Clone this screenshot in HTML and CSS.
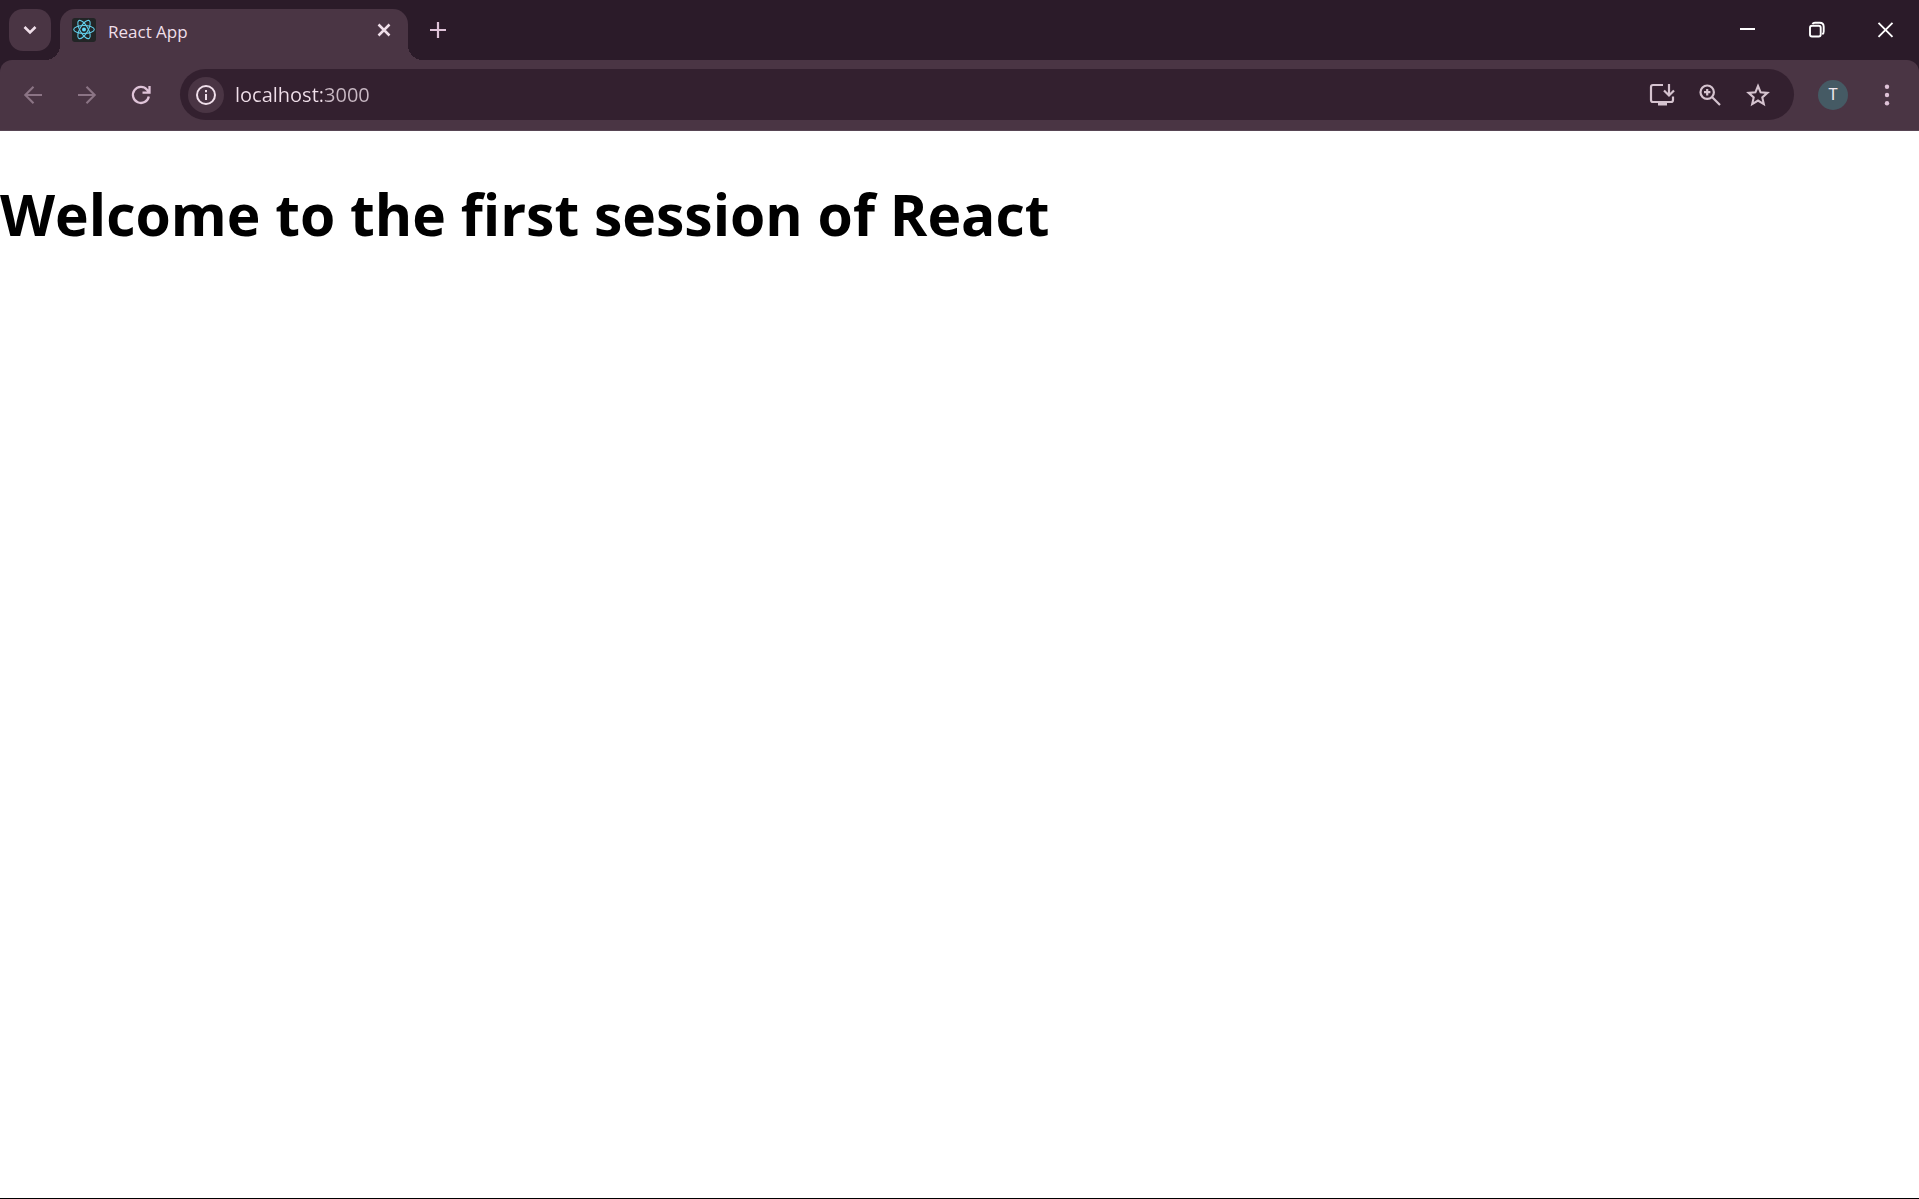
FILE: index.html
```html
<!DOCTYPE html>
<html lang="en">
<head>
<meta charset="utf-8">
<title>React App</title>
<link rel="stylesheet" href="styles.css">
</head>
<body>
<header class="browser">
  <div class="tab-strip">
    <button class="tab-search" type="button" aria-label="Search tabs">
      <svg width="24" height="24" viewBox="0 0 24 24"><path d="M6.500 9l5.500 5.500L17.500 9" fill="none" stroke="currentColor" stroke-width="2.600"/></svg>
    </button>
    <div class="tab">
      <svg class="favicon" width="24" height="24" viewBox="0 0 24 24">
        <rect width="24" height="24" rx="3" fill="#222526"/>
        <g fill="none" stroke="#61cdea" stroke-width="1.100">
          <ellipse cx="12" cy="11.500" rx="10.300" ry="4"/>
          <ellipse cx="12" cy="11.500" rx="10.300" ry="4" transform="rotate(60 12 11.500)"/>
          <ellipse cx="12" cy="11.500" rx="10.300" ry="4" transform="rotate(120 12 11.500)"/>
        </g>
        <circle cx="12" cy="11.500" r="2" fill="#61dafb"/>
      </svg>
      <span class="tab-title">React App</span>
      <button class="tab-close" type="button" aria-label="Close tab">
        <svg width="24" height="24" viewBox="0 0 24 24"><path d="M6.500 6.500l11 11m0-11l-11 11" stroke="currentColor" stroke-width="2.500"/></svg>
      </button>
    </div>
    <button class="new-tab" type="button" aria-label="New tab">
      <svg width="24" height="24" viewBox="0 0 24 24"><path d="M12 4v16M4 12h16" stroke="currentColor" stroke-width="2.200"/></svg>
    </button>
    <div class="window-controls">
      <button type="button" aria-label="Minimize"><svg width="24" height="24" viewBox="0 0 24 24"><path d="M5 11h15" stroke="currentColor" stroke-width="2"/></svg></button>
      <button type="button" aria-label="Restore"><svg width="24" height="24" viewBox="0 0 24 24"><g fill="none" stroke="currentColor" stroke-width="1.900"><rect x="6" y="7.800" width="10.700" height="10.700" rx="2"/><path d="M8.400 6q.800-1.200 2.600-1.200h4.700q4 0 4 4v4.700q0 2-1.400 2.800"/></g></svg></button>
      <button type="button" aria-label="Close"><svg width="24" height="24" viewBox="0 0 24 24"><path d="M5.500 4.800l14 14m0-14l-14 14" stroke="currentColor" stroke-width="1.900"/></svg></button>
    </div>
  </div>
  <div class="toolbar">
    <button class="tool disabled" type="button" aria-label="Back"><svg width="24" height="24" viewBox="0 0 24 24"><path d="M21 12H5M12.500 3.800L4.300 12l8.200 8.200" fill="none" stroke="currentColor" stroke-width="2.100"/></svg></button>
    <button class="tool disabled" type="button" aria-label="Forward"><svg width="24" height="24" viewBox="0 0 24 24"><path d="M3 12h16M11.500 3.800l8.200 8.200-8.200 8.200" fill="none" stroke="currentColor" stroke-width="2.100"/></svg></button>
    <button class="tool" type="button" aria-label="Reload"><svg width="24" height="24" viewBox="0 0 24 24"><path d="M19.800 13.500A8 8 0 1 1 18 6.700l2 2.300M20.500 3v6.700h-7" fill="none" stroke="currentColor" stroke-width="2.300"/></svg></button>
    <div class="omnibox">
      <button class="site-info" type="button" aria-label="View site information"><svg width="24" height="24" viewBox="0 0 24 24"><circle cx="12" cy="12" r="9" fill="none" stroke="currentColor" stroke-width="2"/><path d="M11 11h2v6h-2zM11 7h2v2.200h-2z" fill="currentColor"/></svg></button>
      <input class="address" type="text" value="localhost:3000" aria-label="Address and search bar">
      <button class="page-action" type="button" aria-label="Install app"><svg width="26" height="26" viewBox="0 0 26 26"><g fill="none" stroke="currentColor" stroke-width="2.200"><path d="M14 3H4q-2 0-2 2v13q0 2 2 2h18q2 0 2-2v-3.500"/><path d="M20 2v11M15 8.500l5 5 5-5"/></g><path d="M9 20h9v3.500H9z" fill="currentColor"/></svg></button>
      <button class="page-action" type="button" aria-label="Zoom"><svg width="24" height="24" viewBox="0 0 24 24"><g fill="none" stroke="currentColor" stroke-width="2.200"><circle cx="9.200" cy="9.200" r="6.700"/><path d="M14 14l8 8M9.200 6v6.400M6 9.200h6.400"/></g></svg></button>
      <button class="page-action" type="button" aria-label="Bookmark this tab"><svg width="24" height="24" viewBox="0 0 24 24"><path d="M12 3l2.600 6.300 6.800.600-5.100 4.500 1.500 6.700L12 17.500l-5.800 3.600 1.500-6.700-5.100-4.500 6.800-.600z" fill="none" stroke="currentColor" stroke-width="2.100"/></svg></button>
    </div>
    <button class="tool" type="button" aria-label="Profile"><span class="avatar">T</span></button>
    <button class="tool" type="button" aria-label="Menu"><svg width="24" height="24" viewBox="0 0 24 24" fill="currentColor"><circle cx="12" cy="3.700" r="2.200"/><circle cx="12" cy="12" r="2.200"/><circle cx="12" cy="20.300" r="2.200"/></svg></button>
  </div>
</header>
<main class="page">
  <h1 class="headline">Welcome to the first session of React</h1>
</main>
</body>
</html>
```
FILE: styles.css
```css
* { box-sizing: border-box; }

body {
  display: flex;
  flex-direction: column;
  min-height: 100vh;
  margin: 0;
  background: #fff;
  font-family: "Open Sans", "Noto Sans", sans-serif;
}

button {
  display: flex;
  align-items: center;
  justify-content: center;
  flex: none;
  padding: 0;
  border: 0;
  background: none;
  color: inherit;
  font: inherit;
}

.browser {
  background: #2b1b29;
  color: #dfc3d8;
}

.tab-strip {
  display: flex;
  align-items: flex-start;
  height: 60px;
  padding: 9px 0 0 9px;
}

.tab-search {
  width: 42px;
  height: 42px;
  border-radius: 14px;
  background: #4a3544;
  color: #f0dfea;
}

.tab {
  position: relative;
  display: flex;
  align-items: center;
  width: 348px;
  height: 51px;
  margin-left: 9px;
  padding: 0 12px 9px;
  border-radius: 15px 15px 0 0;
  background: #4a3544;
  color: #f0dfea;
}

/* Curved feet joining the active tab to the toolbar */
.tab::before,
.tab::after {
  content: "";
  position: absolute;
  bottom: 0;
  width: 15px;
  height: 15px;
}

.tab::before {
  right: 100%;
  background: radial-gradient(circle at 0 0, transparent 15px, #4a3544 15px);
}

.tab::after {
  left: 100%;
  background: radial-gradient(circle at 100% 0, transparent 15px, #4a3544 15px);
}

.tab-title {
  flex: 1;
  padding: 3px 0 0 12px;
  font-size: 17px;
  line-height: 24px;
}

.new-tab {
  width: 42px;
  height: 42px;
  margin-left: 9px;
}

.window-controls {
  display: flex;
  margin-left: auto;
  color: #fff;
}

.window-controls button {
  width: 69px;
  height: 42px;
}

.toolbar {
  display: flex;
  align-items: center;
  height: 71px;
  padding: 0 5px 1px 6px;
  border-bottom: 1px solid #574553;
  border-radius: 12px 12px 0 0;
  background: #4a3544;
}

.tool {
  width: 54px;
  height: 51px;
  padding-top: 1px;
}

.disabled { color: #8b7485; }

.omnibox {
  display: flex;
  align-items: center;
  flex: 1;
  height: 51px;
  margin: 0 12px;
  padding: 1px 12px 0 8px;
  border-radius: 26px;
  background: #33202f;
  color: #d5c3cf;
}

.site-info {
  width: 36px;
  height: 36px;
  border-radius: 50%;
  background: #4a3544;
  color: #f0dfea;
}

.address {
  flex: 1;
  min-width: 0;
  padding: 0 0 0 11px;
  border: 0;
  outline: 0;
  background: linear-gradient(90deg, #f0dfea 98px, #c9b9c4 98px) text;
  color: transparent;
  font: inherit;
  font-size: 20px;
  line-height: 28px;
}

.page-action {
  width: 48px;
  height: 48px;
}

.avatar {
  width: 30px;
  height: 30px;
  border-radius: 50%;
  background: #455a64;
  color: #f0e8ee;
  font-family: Roboto, sans-serif;
  font-size: 16px;
  line-height: 30px;
}

.page {
  flex: 1;
  border-bottom: 1px solid #000;
}

.headline {
  margin: 43px 0;
  font-size: 57px;
  line-height: 80px;
  font-weight: 700;
  color: #000;
}
```
